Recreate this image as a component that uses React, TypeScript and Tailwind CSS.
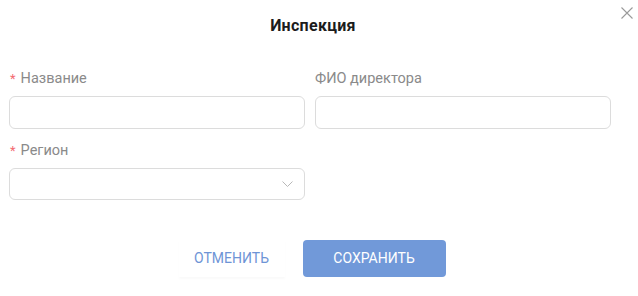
import React from "react";

export default function App() {
  return (
    <div
      className="w-[638px] h-[296px] bg-white relative"
      style={{ fontFamily: "Roboto, 'Noto Sans', sans-serif" }}
    >
      <button className="absolute left-[620px] top-[6px] w-[14px] h-[14px] flex items-center justify-center text-[#9a9a9a]">
        <svg width="12" height="12" viewBox="0 0 12 12" fill="none" stroke="currentColor" strokeWidth="1.1">
          <path d="M0.5 0.5 L11.5 11.5 M11.5 0.5 L0.5 11.5" />
        </svg>
      </button>
      <div className="h-[50px] pt-[2px] pr-[12px] flex items-center justify-center">
        <h1 className="text-[16px] font-bold text-[#1c1c1c] tracking-[0.3px]">Инспекция</h1>
      </div>
      <div className="pl-[9px] pr-[27px] pt-[18px] grid grid-cols-2 gap-x-[10px]">
        <div className="flex flex-col">
          <label className="h-[22px] flex items-center text-[14.5px] text-[#8a8a8a]">
            <span className="text-[#f36b72] ml-[1px] mr-[5px] text-[13px]">*</span>Название
          </label>
          <input className="mt-[6px] h-[33px] rounded-[6px] border border-[#dcdcdc] outline-none px-2" />
        </div>
        <div className="flex flex-col">
          <label className="h-[22px] flex items-center text-[14.5px] text-[#8a8a8a]">ФИО директора</label>
          <input className="mt-[6px] h-[33px] rounded-[6px] border border-[#dcdcdc] outline-none px-2" />
        </div>
        <div className="flex flex-col mt-[11px]">
          <label className="h-[22px] flex items-center text-[14.5px] text-[#8a8a8a]">
            <span className="text-[#f36b72] ml-[1px] mr-[5px] text-[13px]">*</span>Регион
          </label>
          <div className="mt-[6px] h-[32px] rounded-[6px] border border-[#dcdcdc] flex items-center justify-end pr-[11px]">
            <svg width="11" height="6" viewBox="0 0 11 6" fill="none" stroke="#b8b8b8" strokeWidth="1">
              <path d="M0.5 0.5 L5.5 5.5 L10.5 0.5" />
            </svg>
          </div>
        </div>
      </div>
      <div className="mt-[40px] flex justify-center gap-[18px] pr-[14px]">
        <button className="w-[106px] h-[37px] text-[14px] text-[#6e94d6] uppercase shadow-[0_2px_2px_rgba(0,0,0,0.025)]">
          Отменить
        </button>
        <button className="w-[143px] h-[37px] rounded-[4px] bg-[#7199d9] text-white text-[14px] uppercase">
          Сохранить
        </button>
      </div>
    </div>
  );
}
